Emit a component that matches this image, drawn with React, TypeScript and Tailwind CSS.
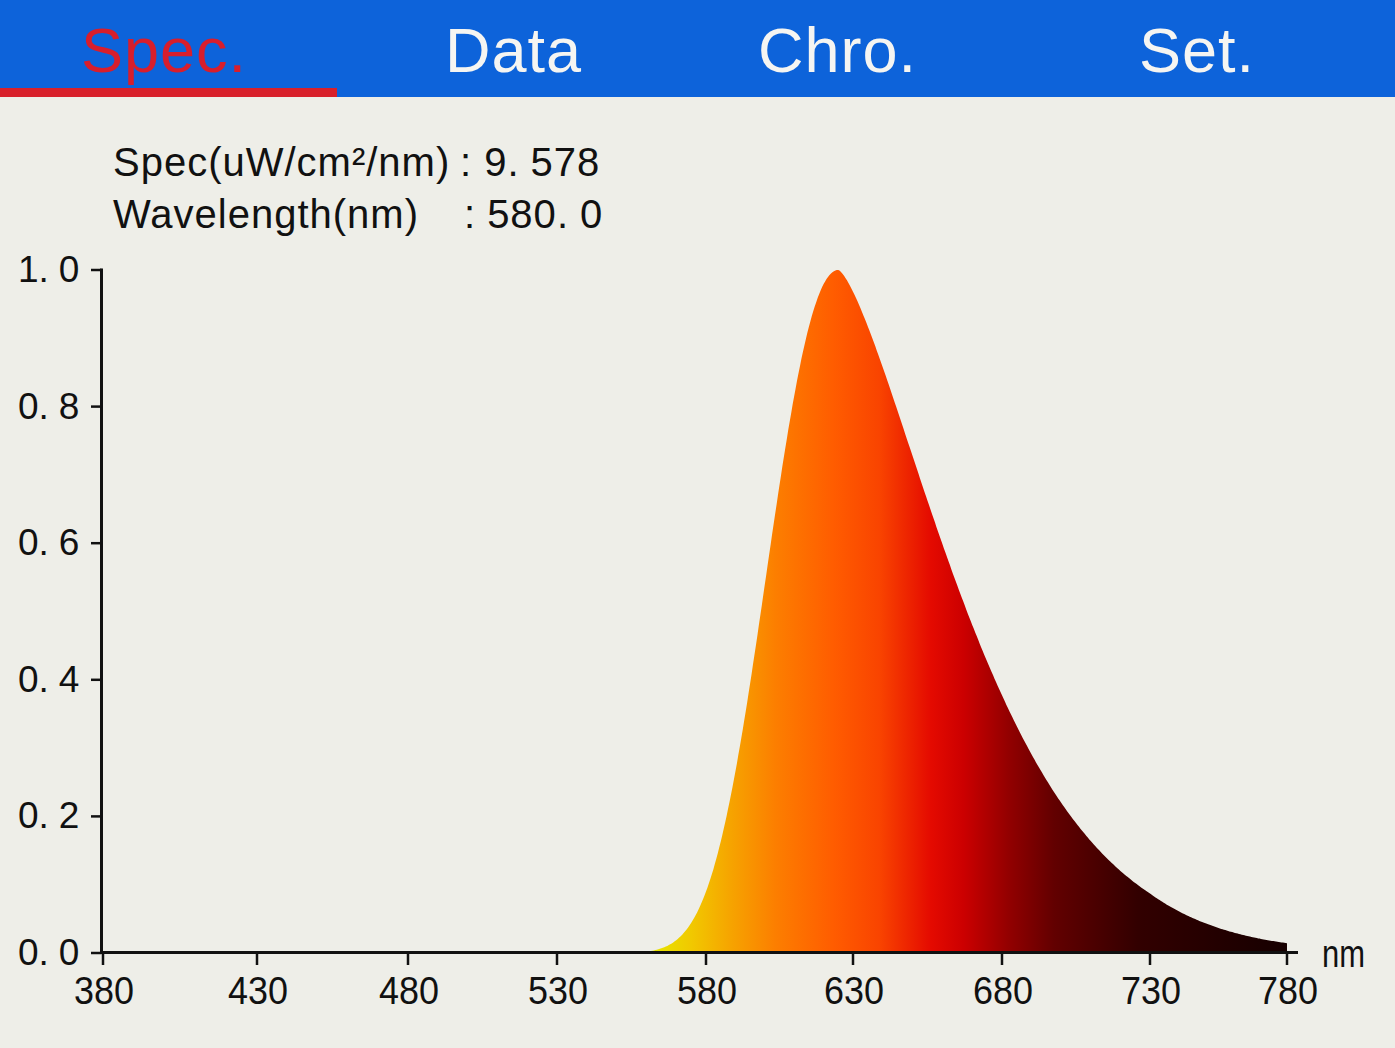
import React from "react";

const TICK_NM = [380, 430, 480, 530, 580, 630, 680, 730, 780];
const TICK_X = [103, 257, 408, 557, 706, 853, 1002, 1150, 1287];
const Y0 = 953;
const YH = 683;

const xOf = (l: number) => {
  for (let i = 0; i < TICK_NM.length - 1; i++) {
    if (l <= TICK_NM[i + 1]) {
      const t = (l - TICK_NM[i]) / (TICK_NM[i + 1] - TICK_NM[i]);
      return TICK_X[i] + t * (TICK_X[i + 1] - TICK_X[i]);
    }
  }
  return TICK_X[TICK_X.length - 1];
};
const yOf = (v: number) => Y0 - YH * v;

function spec(l: number): number {
  const l0 = 625;
  const d = l - l0;
  if (d < 0) {
    const ad = -d;
    const s = 25 - 0.1 * ad;
    return Math.exp(-0.5 * Math.pow(ad / s, 2));
  }
  return Math.exp(-Math.pow(d / 56, 1.42));
}

function buildPath(): string {
  const parts: string[] = [`M ${xOf(545).toFixed(1)} ${Y0}`];
  for (let l = 545; l <= 780; l += 0.5) {
    parts.push(`L ${xOf(l).toFixed(1)} ${yOf(spec(l)).toFixed(1)}`);
  }
  parts.push(`L ${xOf(780).toFixed(1)} ${Y0} Z`);
  return parts.join(" ");
}

const yTicks = [
  { v: 1.0, a: "1", b: "0" },
  { v: 0.8, a: "0", b: "8" },
  { v: 0.6, a: "0", b: "6" },
  { v: 0.4, a: "0", b: "4" },
  { v: 0.2, a: "0", b: "2" },
  { v: 0.0, a: "0", b: "0" },
];

function Chart() {
  const path = buildPath();
  return (
    <svg width={1395} height={808} viewBox="0 240 1395 808" className="block">
      <defs>
        <linearGradient id="specGrad" gradientUnits="userSpaceOnUse" x1="640" y1="0" x2="1287" y2="0">
          <stop offset="0" stopColor="#e4ef00" />
          <stop offset="0.08" stopColor="#f1c800" />
          <stop offset="0.14" stopColor="#f6a400" />
          <stop offset="0.21" stopColor="#fc7e00" />
          <stop offset="0.30" stopColor="#ff5c00" />
          <stop offset="0.37" stopColor="#f94400" />
          <stop offset="0.45" stopColor="#e40a00" />
          <stop offset="0.50" stopColor="#cc0000" />
          <stop offset="0.57" stopColor="#920000" />
          <stop offset="0.64" stopColor="#620000" />
          <stop offset="0.77" stopColor="#320000" />
          <stop offset="1" stopColor="#160000" />
        </linearGradient>
      </defs>

      <path d={path} fill="url(#specGrad)" />

      {/* y axis */}
      <line x1={101.5} y1={268.5} x2={101.5} y2={954} stroke="#111" strokeWidth={3} />
      {yTicks.map((t) => (
        <line key={"yt" + t.v} x1={91} y1={yOf(t.v)} x2={101.5} y2={yOf(t.v)} stroke="#111" strokeWidth={2.5} />
      ))}
      {/* x axis */}
      <line x1={101} y1={952.5} x2={1298} y2={952.5} stroke="#111" strokeWidth={3} />
      {TICK_X.map((x) => (
        <line key={"xt" + x} x1={x} y1={952} x2={x} y2={965} stroke="#111" strokeWidth={2.5} />
      ))}

      {/* y labels */}
      {yTicks.map((t) => (
        <text
          key={"yl" + t.v}
          x={18}
          y={yOf(t.v) + 12}
          fontFamily="'Liberation Sans', Arial, sans-serif"
          fontSize={37}
          fill="#111"
        >
          <tspan>{t.a}</tspan>
          <tspan>.</tspan>
          <tspan dx={10}>{t.b}</tspan>
        </text>
      ))}

      {/* x labels */}
      {TICK_NM.map((l, i) => (
        <text
          key={"xl" + l}
          x={TICK_X[i] + 1}
          y={1004}
          textAnchor="middle"
          fontFamily="'Liberation Sans', Arial, sans-serif"
          fontSize={39}
          fill="#111"
          textLength={60}
          lengthAdjust="spacingAndGlyphs"
        >
          {l}
        </text>
      ))}
      <text
        x={1322}
        y={967}
        fontFamily="'Liberation Sans', Arial, sans-serif"
        fontSize={38}
        fill="#111"
        textLength={43}
        lengthAdjust="spacingAndGlyphs"
      >
        nm
      </text>
    </svg>
  );
}

export default function App() {
  return (
    <div className="w-[1395px] h-[1048px] overflow-hidden bg-[#eeeee8] flex flex-col font-['Liberation_Sans',Arial,sans-serif]">
      {/* header tabs */}
      <div className="h-[97px] shrink-0 bg-[#0d63da] flex">
        <div className="w-[337px] flex flex-col">
          <div className="flex-1 pt-[18px] pr-[9px] text-center text-[63px] leading-[64px] text-[#d81e2c] tracking-[1px]">
            Spec.
          </div>
          <div className="h-[9px] bg-[#d8202a]" />
        </div>
        <div className="w-[353px] pt-[18px] text-center text-[63px] leading-[64px] text-[#f5f5f2] tracking-[1px]">
          Data
        </div>
        <div className="w-[295px] pt-[18px] text-center text-[63px] leading-[64px] text-[#f5f5f2] tracking-[1px]">
          Chro.
        </div>
        <div className="w-[410px] pt-[18px] pl-[14px] text-center text-[63px] leading-[64px] text-[#f5f5f2] tracking-[1px]">
          Set.
        </div>
      </div>

      {/* readout */}
      <div className="h-[143px] shrink-0 pt-[39px] pl-[113px] text-[40px] leading-[52px] text-[#111] tracking-[1px]">
        <div className="flex">
          <span className="w-[347px]">Spec(uW/cm²/nm)</span>
          <span>:</span>
          <span className="ml-[12px]">
            9<span className="mr-[11px]">.</span>578
          </span>
        </div>
        <div className="flex">
          <span className="w-[351px]">Wavelength(nm)</span>
          <span>:</span>
          <span className="ml-[11px]">
            580<span className="mr-[11px]">.</span>0
          </span>
        </div>
      </div>

      <Chart />
    </div>
  );
}
